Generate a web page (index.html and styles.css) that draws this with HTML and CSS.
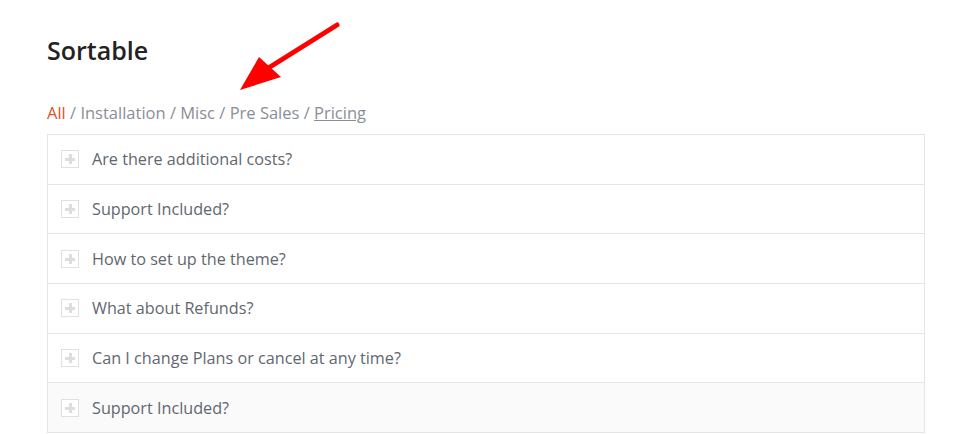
FILE: index.html
```html
<!DOCTYPE html>
<html lang="en">
<head>
    <meta charset="UTF-8">
    <title>Sortable</title>
    <link rel="stylesheet" href="styles.css">
</head>
<body>

    <div class="container">
        <h2>Sortable</h2>

        <p class="filtros">
            <a href="#" class="ativo">All</a> / <a href="#">Installation</a> / <a href="#">Misc</a> / <a href="#">Pre Sales</a> / <a href="#" class="sublinhado">Pricing</a>
        </p>

        <div class="acordeao">
            <div class="item"><span class="icone"></span>Are there additional costs?</div>
            <div class="item"><span class="icone"></span>Support Included?</div>
            <div class="item"><span class="icone"></span>How to set up the theme?</div>
            <div class="item"><span class="icone"></span>What about Refunds?</div>
            <div class="item"><span class="icone"></span>Can I change Plans or cancel at any time?</div>
            <div class="item destaque"><span class="icone"></span>Support Included?</div>
        </div>
    </div>

    <svg class="seta" width="961" height="120" viewBox="0 0 961 120">
        <line x1="337" y1="25" x2="262" y2="72" stroke="#ff0000" stroke-width="5" stroke-linecap="round"/>
        <polygon points="240,90 259,57 281,77" fill="#ff0000"/>
    </svg>

</body>
</html>
```

FILE: styles.css
```css
body {
    font-family: "Open Sans", sans-serif;
    background-color: #fff;
    margin: 0;
    padding: 0;
}

.container {
    width: 878px;
    margin-left: 47px;
    padding-top: 33px;
}

h2 {
    margin: 0;
    font-size: 25px;
    font-weight: 600;
    line-height: 34px;
    color: #222;
}

.filtros {
    margin: 34px 0 9px;
    font-size: 16.5px;
    line-height: 24px;
    color: #8a8e96;
}

.filtros a {
    color: #8a8e96;
    text-decoration: none;
}

.filtros a.ativo {
    color: #e2502c;
}

.filtros a.sublinhado {
    text-decoration: underline;
}

.acordeao {
    border: 1px solid #e5e5e5;
    border-bottom: none;
}

.item {
    display: flex;
    align-items: center;
    height: 48.7px;
    padding-left: 13px;
    border-bottom: 1px solid #e5e5e5;
    font-size: 16.2px;
    color: #62676f;
}

.item.destaque {
    background-color: #fafafa;
}

.icone {
    position: relative;
    width: 16px;
    height: 16px;
    border: 1px solid #e0e0e0;
    margin-right: 13px;
    background: #fff;
}

.icone::before,
.icone::after {
    content: "";
    position: absolute;
    background: #ddd;
}

.icone::before {
    left: 3px;
    top: 7px;
    width: 10px;
    height: 3px;
}

.icone::after {
    left: 7px;
    top: 3px;
    width: 3px;
    height: 10px;
}

.seta {
    position: absolute;
    left: 0;
    top: 0;
}
```
